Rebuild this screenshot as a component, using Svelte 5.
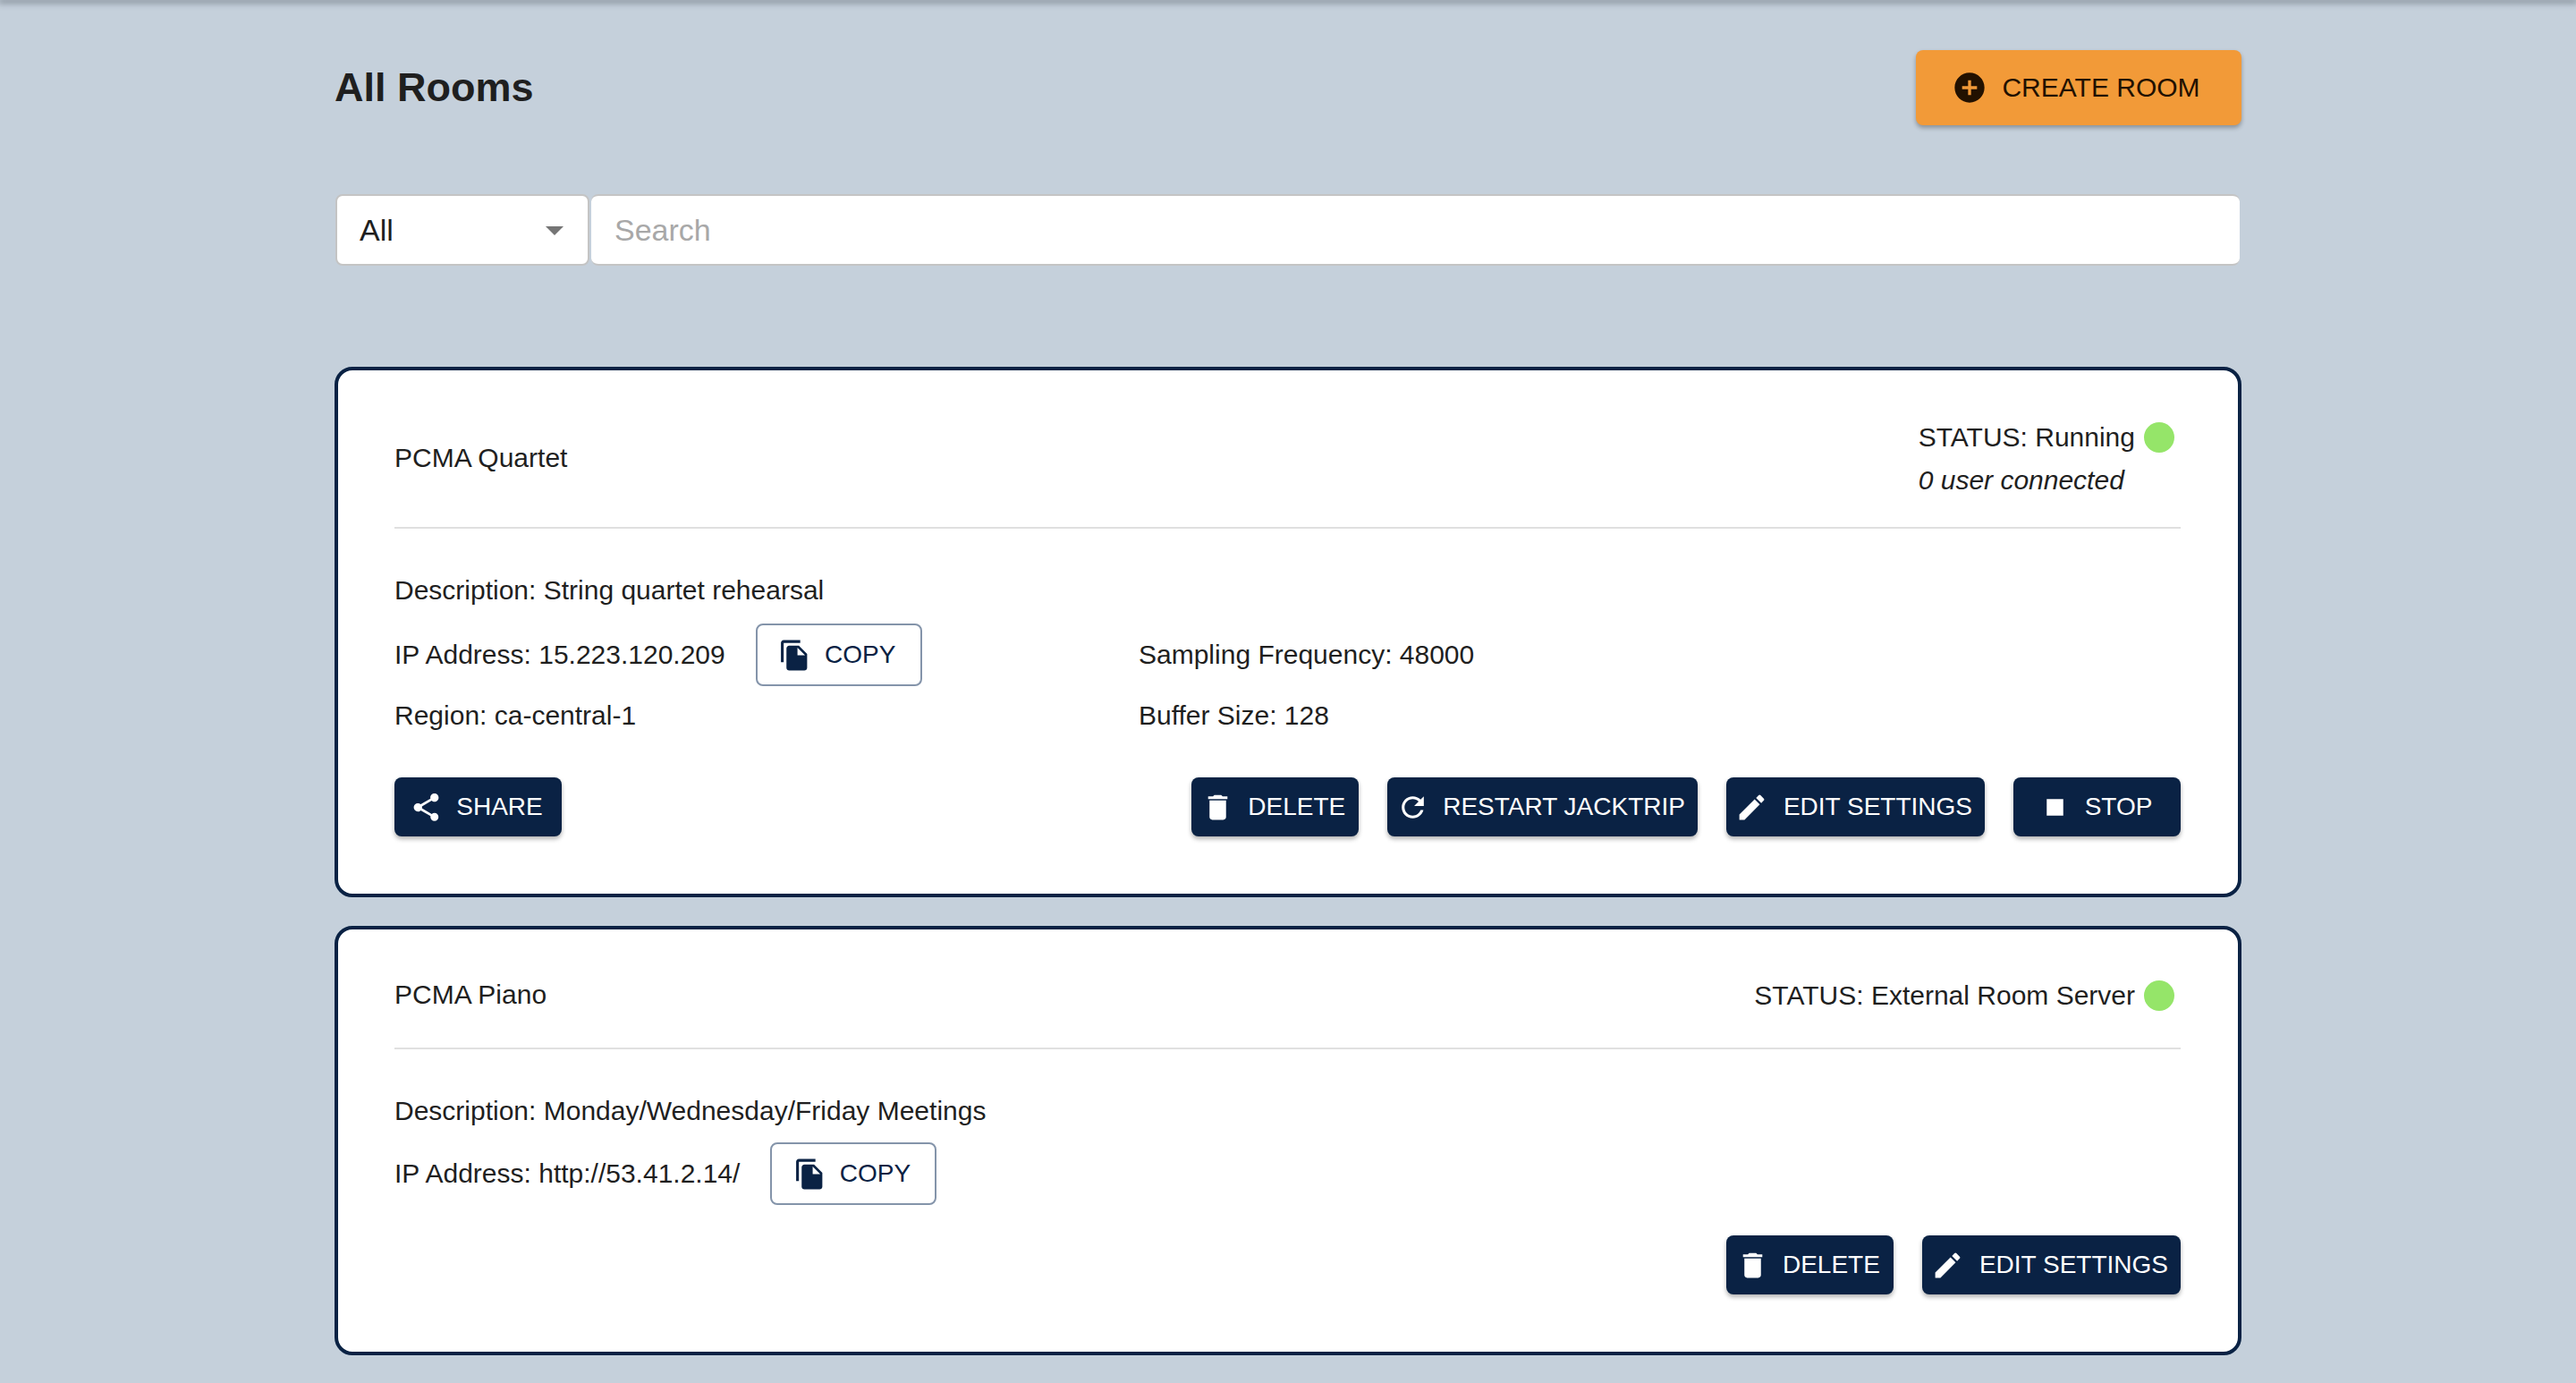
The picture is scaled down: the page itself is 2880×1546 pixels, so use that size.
<script>
  const icons = {
    copy: "M16 1H4c-1.1 0-2 .9-2 2v14h2V3h12V1zm-1 4 6 6v10c0 1.1-.9 2-2 2H7.99C6.89 23 6 22.1 6 21l.01-14c0-1.1.89-2 1.99-2h7zm-1 7h5.5L14 6.5V12z",
    share: "M18 16.08c-.76 0-1.44.3-1.96.77L8.91 12.7c.05-.23.09-.46.09-.7s-.04-.47-.09-.7l7.05-4.11c.54.5 1.25.81 2.04.81 1.66 0 3-1.34 3-3s-1.34-3-3-3-3 1.34-3 3c0 .24.04.47.09.7L8.04 9.81C7.5 9.31 6.79 9 6 9c-1.66 0-3 1.34-3 3s1.34 3 3 3c.79 0 1.5-.31 2.04-.81l7.12 4.16c-.05.21-.08.43-.08.65 0 1.61 1.31 2.92 2.92 2.92 1.61 0 2.92-1.31 2.92-2.92s-1.31-2.92-2.92-2.92z",
    del: "M6 19c0 1.1.9 2 2 2h8c1.1 0 2-.9 2-2V7H6v12zM19 4h-3.5l-1-1h-5l-1 1H5v2h14V4z",
    restart: "M17.65 6.35C16.2 4.9 14.21 4 12 4c-4.42 0-7.99 3.58-7.99 8s3.57 8 7.99 8c3.73 0 6.84-2.55 7.73-6h-2.08c-.82 2.33-3.04 4-5.65 4-3.31 0-6-2.69-6-6s2.69-6 6-6c1.66 0 3.14.69 4.22 1.78L13 11h7V4l-2.35 2.35z",
    edit: "M3 17.25V21h3.75L17.81 9.94l-3.75-3.75L3 17.25zM20.71 7.04c.39-.39.39-1.02 0-1.41l-2.34-2.34a.9959.9959 0 0 0-1.41 0l-1.83 1.83 3.75 3.75 1.83-1.83z",
    stop: "M6 6h12v12H6z"
  };
</script>

{#snippet action(icon, label)}
  <button class="btn {icon}">
    <svg viewBox="0 0 24 24"><path d={icons[icon]} /></svg>
    {label}
  </button>
{/snippet}

{#snippet copyBtn()}
  <button class="btn copy">
    <svg viewBox="0 0 24 24"><path d={icons.copy} /></svg>
    COPY
  </button>
{/snippet}

<div class="appbar"></div>
<main class="page">
  <header class="top">
    <h1>All Rooms</h1>
    <button class="create">
      <svg viewBox="0 0 24 24"><path d="M12 2C6.48 2 2 6.48 2 12s4.48 10 10 10 10-4.48 10-10S17.52 2 12 2zm5 11h-4v4h-2v-4H7v-2h4V7h2v4h4v2z" /></svg>
      CREATE ROOM
    </button>
  </header>

  <div class="filters">
    <div class="select">
      <span>All</span>
      <svg viewBox="0 0 24 24"><path d="M7 10l5 5 5-5z" /></svg>
    </div>
    <input class="search" placeholder="Search" />
  </div>

  <section class="card first">
    <div class="card-head tall">
      <div class="name">PCMA Quartet</div>
      <div class="status">
        <div class="status-line">STATUS: Running <span class="dot"></span></div>
        <div class="users">0 user connected</div>
      </div>
    </div>
    <div class="info">
      <div class="row">Description: String quartet rehearsal</div>
      <div class="cols">
        <div class="row ip">IP Address: 15.223.120.209 {@render copyBtn()}</div>
        <div class="row">Sampling Frequency: 48000</div>
        <div class="row">Region: ca-central-1</div>
        <div class="row">Buffer Size: 128</div>
      </div>
    </div>
    <div class="actions">
      {@render action("share", "SHARE")}
      <div class="actions-right">
        {@render action("del", "DELETE")}
        {@render action("restart", "RESTART JACKTRIP")}
        {@render action("edit", "EDIT SETTINGS")}
        {@render action("stop", "STOP")}
      </div>
    </div>
  </section>

  <section class="card">
    <div class="card-head">
      <div class="name">PCMA Piano</div>
      <div class="status">
        <div class="status-line">STATUS: External Room Server <span class="dot"></span></div>
      </div>
    </div>
    <div class="info">
      <div class="row">Description: Monday/Wednesday/Friday Meetings</div>
      <div class="row ip">IP Address: http://53.41.2.14/ {@render copyBtn()}</div>
    </div>
    <div class="actions">
      <div class="actions-right">
        {@render action("del", "DELETE")}
        {@render action("edit", "EDIT SETTINGS")}
      </div>
    </div>
  </section>
</main>

<style>
  :global(body) {
    background: #c5d0db;
    font-family: "Liberation Sans", Arial, sans-serif;
    color: #1f1f1f;
    font-size: 30px;
  }

  .appbar {
    height: 0;
    box-shadow: 0 1px 7px 2px rgba(40, 50, 60, 0.55);
  }

  .page {
    width: 2132px;
    margin: 0 auto;
  }

  .top {
    display: flex;
    justify-content: space-between;
    align-items: center;
    padding-top: 56px;
    height: 84px;
  }

  h1 {
    margin: 0;
    font-size: 45px;
    font-weight: 700;
    line-height: 84px;
  }

  button {
    font-family: inherit;
    cursor: pointer;
  }

  .create {
    display: flex;
    align-items: center;
    justify-content: center;
    width: 364px;
    height: 84px;
    padding: 0 6px 0 0;
    border: 0;
    border-radius: 8px;
    background: #f29a38;
    color: #221100;
    font-size: 30px;
    box-shadow: 0 3px 5px rgba(0, 0, 0, 0.3);
  }

  .create svg {
    width: 40px;
    height: 40px;
    margin-right: 16px;
    fill: #221100;
  }

  .filters {
    display: flex;
    gap: 2px;
    margin-top: 77px;
    padding: 0 2px 0 1px;
  }

  .select {
    box-sizing: border-box;
    display: flex;
    align-items: center;
    justify-content: space-between;
    width: 284px;
    height: 80px;
    padding: 0 13px 0 25px;
    background: #fff;
    border: 2px solid #c4c4c4;
    border-radius: 8px;
    font-size: 34px;
  }

  .select svg {
    width: 48px;
    height: 48px;
    fill: #757575;
  }

  .search {
    box-sizing: border-box;
    flex: 1;
    height: 80px;
    padding: 0 26px;
    background: #fff;
    border: 0;
    border-top: 2px solid #c4c4c4;
    border-bottom: 2px solid #c4c4c4;
    border-radius: 8px;
    font-family: inherit;
    font-size: 34px;
    outline: none;
  }

  .search::placeholder {
    color: #a8a8a8;
    opacity: 1;
  }

  .card {
    box-sizing: border-box;
    margin-bottom: 32px;
    padding: 0 64px 0 63px;
    background: #fff;
    border: 4px solid #0a2244;
    border-radius: 20px;
  }

  .card.first {
    margin-top: 113px;
  }

  .card-head {
    box-sizing: border-box;
    display: flex;
    justify-content: space-between;
    align-items: center;
    height: 134px;
    padding-top: 14px;
    border-bottom: 2px solid #e0e0e0;
  }

  .card-head.tall {
    height: 177px;
    padding-top: 20px;
  }

  .status {
    display: flex;
    flex-direction: column;
    gap: 14px;
    margin-top: 2px;
    padding-right: 7px;
  }

  .status-line {
    display: flex;
    align-items: center;
    gap: 10px;
    line-height: 34px;
  }

  .users {
    font-style: italic;
    line-height: 34px;
  }

  .dot {
    width: 34px;
    height: 34px;
    border-radius: 50%;
    background: #95e569;
  }

  .info {
    padding-top: 34px;
  }

  .row {
    display: flex;
    align-items: center;
    gap: 34px;
    min-height: 70px;
  }

  .cols {
    display: grid;
    grid-template-columns: 832px 1fr;
    grid-template-rows: 70px 66px;
    margin: 2px 0;
  }

  .cols .row {
    min-height: 0;
  }

  .actions {
    display: flex;
    justify-content: space-between;
    padding: 34px 0 64px;
  }

  .actions-right {
    display: flex;
    gap: 32px;
    margin-left: auto;
  }

  .btn {
    box-sizing: border-box;
    display: flex;
    align-items: center;
    justify-content: center;
    min-width: 187px;
    height: 66px;
    padding: 0 14px;
    border: 0;
    border-radius: 8px;
    background: #0a2244;
    color: #fff;
    font-size: 28px;
    box-shadow: 0 3px 5px rgba(0, 0, 0, 0.3);
  }

  .btn svg {
    width: 37px;
    height: 37px;
    margin-left: -4px;
    margin-right: 15px;
    fill: currentColor;
  }

  .btn.edit svg {
    margin-right: 17px;
  }

  .btn.copy {
    min-width: 186px;
    height: 70px;
    background: #fff;
    border: 2px solid #8494aa;
    color: #0a2244;
    box-shadow: none;
  }
</style>
